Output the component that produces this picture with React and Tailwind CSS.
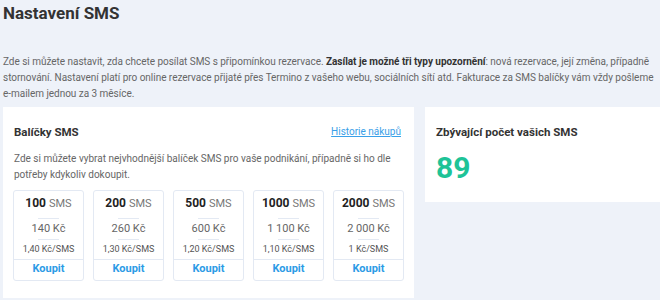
import React from "react";

const packs = [
  { n: "100", price: "140 Kč", per: "1,40 Kč/SMS" },
  { n: "200", price: "260 Kč", per: "1,30 Kč/SMS" },
  { n: "500", price: "600 Kč", per: "1,20 Kč/SMS" },
  { n: "1000", price: "1 100 Kč", per: "1,10 Kč/SMS" },
  { n: "2000", price: "2 000 Kč", per: "1 Kč/SMS" },
];

export default function App() {
  return (
    <div
      className="w-[660px] h-[300px] overflow-hidden bg-[#eef2f9] text-[#333] pl-[3px]"
      style={{ fontFamily: 'Roboto, "Liberation Sans", sans-serif' }}
    >
      <h1 className="text-[17px] font-bold leading-[24px] pt-[1px] text-[#333]">Nastavení SMS</h1>
      <p className="mt-[29px] text-[10px] leading-[16px] text-[#666] whitespace-nowrap tracking-[-0.03px]">
        Zde si můžete nastavit, zda chcete posílat SMS s připomínkou rezervace.{" "}
        <b className="font-bold text-[#333]">Zasílat je možné tři typy upozornění</b>: nová rezervace, její změna, případně
        <br />
        stornování. Nastavení platí pro online rezervace přijaté přes Termino z vašeho webu, sociálních sítí atd. Fakturace za SMS balíčky vám vždy pošleme
        <br />
        e-mailem jednou za 3 měsíce.
      </p>
      <div className="mt-[5px] flex items-start gap-[11px]">
        <div className="w-[411px] bg-white pt-[17px] pb-[17px] px-[10px]">
          <div className="flex items-center justify-between pl-[1px] pr-[3px]">
            <h2 className="text-[11.5px] font-bold leading-[16px] text-[#333]">Balíčky SMS</h2>
            <a href="#" className="text-[10px] leading-[16px] text-[#3aa0e8] underline">Historie nákupů</a>
          </div>
          <p className="mt-[11px] text-[10px] leading-[16px] text-[#666] pl-[1px] whitespace-nowrap">
            Zde si můžete vybrat nejvhodnější balíček SMS pro vaše podnikání, případně si ho dle
            <br />
            potřeby kdykoliv dokoupit.
          </p>
          <div className="mt-[7px] flex gap-[9px]">
            {packs.map((p) => (
              <div key={p.n} className="w-[71px] h-[91px] rounded-[3px] border border-[#e3e9f3] flex flex-col items-center">
                <div className="mt-[4px] text-[12px] leading-[16px] text-[#222]">
                  <span className="font-bold">{p.n}</span> <span className="text-[11px] text-[#777]">SMS</span>
                </div>
                <div className="mt-[6px] w-[21px] h-px bg-[#e3e9f3]"></div>
                <div className="mt-[2px] text-[11px] leading-[16px] text-[#666]">{p.price}</div>
                <div className="mt-[2px] w-[21px] h-px bg-[#e3e9f3]"></div>
                <div className="mt-[1px] text-[9px] leading-[16px] text-[#555]">{p.per}</div>
                <div className="mt-[2px] w-full h-px bg-[#e3e9f3]"></div>
                <a href="#" className="mt-[1px] text-[11px] leading-[16px] font-bold text-[#2b9be6]">Koupit</a>
              </div>
            ))}
          </div>
        </div>
        <div className="flex-1 h-[95px] bg-white pt-[17px] px-[11px]">
          <h2 className="text-[11.5px] font-bold leading-[16px] text-[#333]">Zbývající počet vašich SMS</h2>
          <div className="mt-[11px] text-[30px] font-bold leading-[34px] text-[#1ec397]">89</div>
        </div>
      </div>
    </div>
  );
}
